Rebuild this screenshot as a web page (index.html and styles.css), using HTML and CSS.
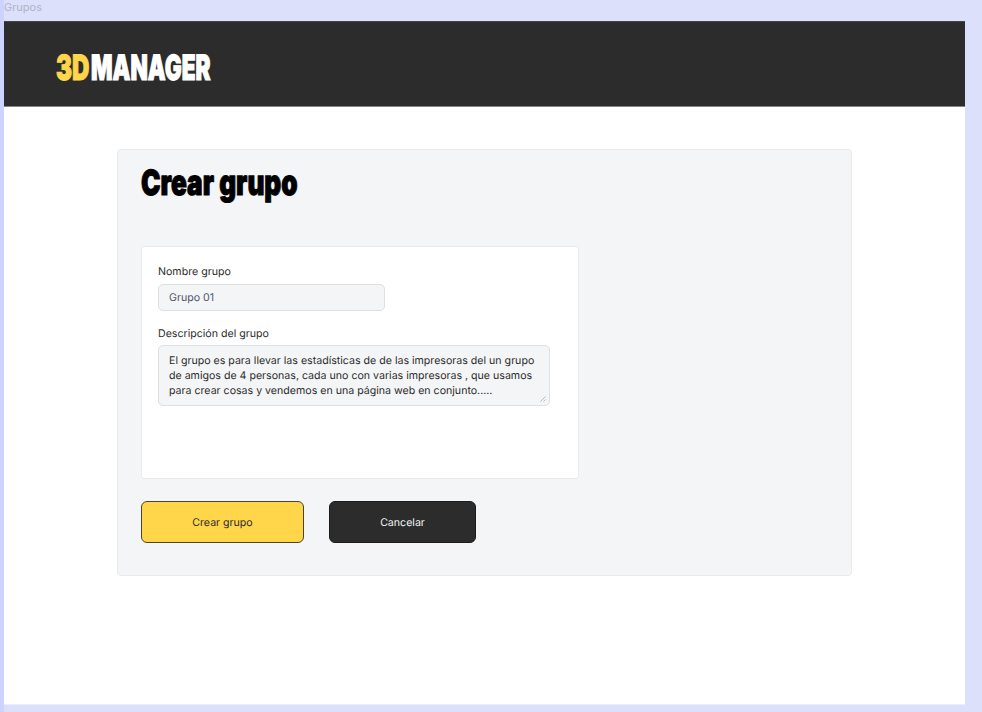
FILE: index.html
```html
<!DOCTYPE html>
<html lang="es">
<head>
<meta charset="utf-8">
<title>3DManager</title>
<link rel="stylesheet" href="styles.css">
</head>
<body>
<div class="frame-label">Grupos</div>
<main class="frame">
  <header class="topbar">
    <svg class="display logo" width="160" height="40">
      <text class="logo-accent" x="0" y="30" textLength="33.5" lengthAdjust="spacingAndGlyphs">3D</text>
      <text class="logo-main" x="35" y="30" textLength="119.5" lengthAdjust="spacingAndGlyphs">MANAGER</text>
    </svg>
  </header>
  <section class="panel">
    <h1 class="title"><svg class="display" width="160" height="44"><text x="0" y="29.5" textLength="156.5" lengthAdjust="spacingAndGlyphs">Crear grupo</text></svg></h1>
    <form class="card">
      <label for="name">Nombre grupo</label>
      <div class="field name" id="name">Grupo 01</div>
      <label for="desc">Descripción del grupo</label>
      <div class="field desc" id="desc">El grupo es para llevar las estadísticas de de las impresoras del un grupo<br>de amigos de 4 personas, cada uno con varias impresoras , que usamos<br>para crear cosas y vendemos en una página web en conjunto.....
        <svg class="grip" width="6" height="6" viewBox="0 0 6 6"><path d="M.5 5.5l5-5M3.5 5.5l2-2"/></svg>
      </div>
    </form>
    <div class="actions">
      <button class="btn primary">Crear grupo</button>
      <button class="btn dark">Cancelar</button>
    </div>
  </section>
</main>
</body>
</html>
```
FILE: styles.css
```css
* { box-sizing: border-box; }
body {
  margin: 0;
  height: 712px;
  overflow: hidden;
  padding-right: 17px;
  border-left: 4px solid #ccd3ff;
  background: #dce0fa;
  font: 10.62px/15px Inter, "Liberation Sans", sans-serif;
  text-rendering: geometricPrecision;
  color: #2c2c2c;
}
.frame-label { height: 21px; line-height: 15px; font-size: 11px; color: #b0b3c8; }
.frame { height: 684px; background: #fff; border-bottom: 1px solid #eceefb; }
.topbar {
  height: 86px;
  padding: 28px 0 0 52px;
  background: #2c2c2c;
  border-top: 1px solid #444449;
  border-bottom: 1px solid #858585;
}
.display {
  display: block;
  overflow: visible;
  font-family: Inter, "Liberation Sans", sans-serif;
  font-size: 35px;
  line-height: 1;
  font-weight: 900;
  stroke-width: 1.1px;
}
.logo-accent { fill: #ffd54a; stroke: #ffd54a; }
.logo-main { fill: #fff; stroke: #fff; }
.panel {
  width: 735px;
  height: 427px;
  margin: 42px 0 0 113px;
  padding: 15px 23px;
  background: #f4f5f7;
  border: 1px solid #e9eaec;
  border-radius: 4px;
}
.title { height: 81px; margin: 0; }
.title .display { fill: #000; stroke: #000; }
.card {
  width: 438px;
  height: 233px;
  padding: 17px 16px;
  background: #fff;
  border: 1px solid #e9eaec;
  border-radius: 3px;
}
.card label { display: block; height: 20px; line-height: 16px; }
.field {
  position: relative;
  padding: 5px 10px;
  background: #f4f5f7;
  border: 1px solid #dedfe1;
  border-radius: 5px;
}
.name { width: 227px; height: 27px; margin-bottom: 14px; line-height: 15px; color: #4d566b; }
.name + label { line-height: 17px; }
.desc { width: 392px; height: 61px; padding: 8px 10px; line-height: 14.8px; white-space: nowrap; }
.grip { position: absolute; right: 3px; bottom: 3px; fill: none; stroke: #a5a5a5; stroke-width: .7; }
.actions { display: flex; gap: 25px; margin: 22px 0 0; }
.btn { height: 42px; padding: 0; font: inherit; text-rendering: inherit; border-radius: 6px; }
.primary { width: 163px; color: #2c2c2c; background: #ffd54a; border: 1px solid #4b432c; }
.dark { width: 147px; color: #f4f5f7; background: #2c2c2c; border: 1px solid #1b1b1b; }
```
